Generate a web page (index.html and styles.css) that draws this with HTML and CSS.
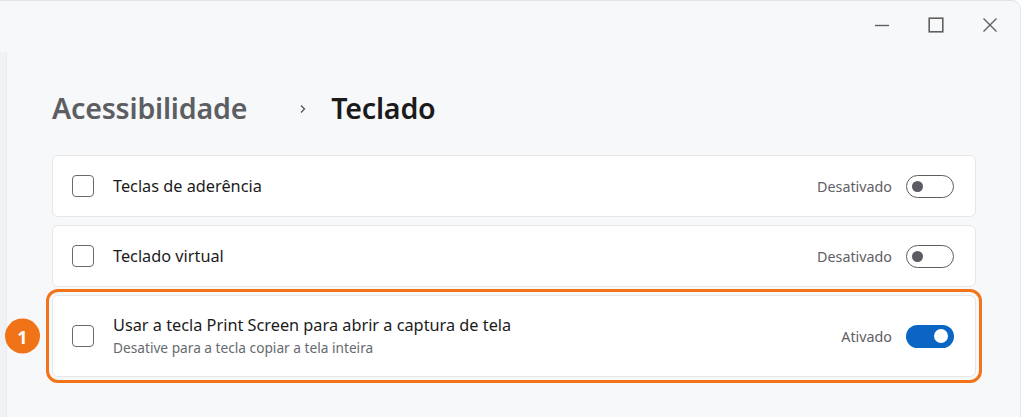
FILE: index.html
```html
<!DOCTYPE html>
<html lang="pt-BR">
<head>
<meta charset="utf-8">
<title>Teclado</title>
<link rel="stylesheet" href="styles.css">
</head>
<body>
<div class="window">
  <div class="titlebar">
    <button class="ctrl" aria-label="Minimizar">
      <svg width="16" height="16" viewBox="0 0 16 16"><path d="M1 8.5h14" stroke="#5f5f5f" stroke-width="1.4" fill="none"/></svg>
    </button>
    <button class="ctrl" aria-label="Maximizar">
      <svg width="16" height="16" viewBox="0 0 16 16"><rect x="1.2" y="1.2" width="13.6" height="13.6" stroke="#5f5f5f" stroke-width="1.6" fill="none"/></svg>
    </button>
    <button class="ctrl" aria-label="Fechar">
      <svg width="16" height="16" viewBox="0 0 16 16"><path d="M1.5 1.5l13 13M14.5 1.5l-13 13" stroke="#5f5f5f" stroke-width="1.4" fill="none"/></svg>
    </button>
  </div>
  <div class="main">
    <div class="nav-edge"></div>
    <div class="content">
      <h1 class="breadcrumb">
        <span class="crumb-parent">Acessibilidade</span>
        <span class="crumb-sep">
          <svg width="8" height="10" viewBox="0 0 8 10"><path d="M2 1.5l3.5 3.5L2 8.5" stroke="#555" stroke-width="1.3" fill="none"/></svg>
        </span>
        <span class="crumb-current">Teclado</span>
      </h1>
      <div class="list">
        <div class="card">
          <span class="checkbox"></span>
          <div class="label"><div class="title">Teclas de aderência</div></div>
          <span class="state">Desativado</span>
          <span class="toggle off"><span class="knob"></span></span>
        </div>
        <div class="card">
          <span class="checkbox"></span>
          <div class="label"><div class="title">Teclado virtual</div></div>
          <span class="state">Desativado</span>
          <span class="toggle off"><span class="knob"></span></span>
        </div>
        <div class="card tall highlight">
          <span class="badge">1</span>
          <span class="checkbox"></span>
          <div class="label">
            <div class="title">Usar a tecla Print Screen para abrir a captura de tela</div>
            <div class="subtitle">Desative para a tecla copiar a tela inteira</div>
          </div>
          <span class="state">Ativado</span>
          <span class="toggle on"><span class="knob"></span></span>
        </div>
      </div>
    </div>
  </div>
</div>
</body>
</html>
```

FILE: styles.css
```css
html, body {
  margin: 0;
  padding: 0;
  background: #ffffff;
  height: 100%;
}
body {
  font-family: "Noto Sans", "Open Sans", sans-serif;
  color: #1b1b1b;
  overflow: hidden;
}
.window {
  width: 1021px;
  height: 430px;
  background: #f7f8fa;
  border-top: 1px solid #e2e3e5;
  border-right: 1px solid #e6e7e9;
  border-top-right-radius: 9px;
  display: flex;
  flex-direction: column;
  box-sizing: border-box;
}
.titlebar {
  height: 51px;
  display: flex;
  justify-content: flex-end;
  align-items: flex-start;
  padding-right: 18px;
  gap: 30px;
}
.ctrl {
  border: 0;
  background: transparent;
  padding: 0;
  margin-top: 16px;
  width: 24px;
  height: 16px;
  display: flex;
  align-items: center;
  justify-content: center;
}
.ctrl svg { display: block; }
.main {
  flex: 1;
  display: flex;
}
.nav-edge {
  width: 6px;
  background: #f1f2f4;
  border-right: 1px solid #eaebed;
}
.content {
  flex: 1;
  padding: 0 44px 0 45px;
}
.breadcrumb {
  margin: 0;
  padding-top: 36px;
  height: 40px;
  display: flex;
  align-items: center;
  font-size: 28.6px;
  font-weight: 600;
  line-height: 40px;
  letter-spacing: -0.2px;
}
.crumb-parent { color: #5c5e62; }
.crumb-sep {
  display: flex;
  align-items: center;
  margin: 0 24px 0 52px;
  padding-top: 2px;
}
.crumb-current { color: #1b1b1b; }
.list {
  margin-top: 27px;
  display: flex;
  flex-direction: column;
  gap: 8px;
}
.card {
  position: relative;
  height: 62px;
  box-sizing: border-box;
  background: #ffffff;
  border: 1px solid #e6e7e9;
  border-radius: 6px;
  display: flex;
  align-items: center;
  padding: 0 21px 0 19px;
}
.card.tall { height: 82px; }
.card.highlight {
  outline: 3px solid #f27318;
  outline-offset: 3px;
  border-radius: 6px;
}
.checkbox {
  width: 22px;
  height: 22px;
  box-sizing: border-box;
  border: 1.5px solid #6a6a6a;
  border-radius: 4px;
  flex: none;
  margin-right: 19px;
}
.label {
  flex: 1;
  display: flex;
  flex-direction: column;
}
.title {
  font-size: 16.3px;
  line-height: 21px;
  color: #1b1b1b;
}
.subtitle {
  font-size: 13.7px;
  line-height: 18px;
  color: #666a6f;
  margin-top: 3px;
}
.state {
  font-size: 14.3px;
  color: #5f6063;
  margin-right: 14px;
}
.toggle {
  width: 48px;
  height: 23px;
  box-sizing: border-box;
  border-radius: 12px;
  display: flex;
  align-items: center;
  flex: none;
}
.toggle.off {
  border: 1.5px solid #5d5d5d;
  padding-left: 5px;
}
.toggle.off .knob {
  width: 11px;
  height: 11px;
  border-radius: 50%;
  background: #5a5b63;
}
.toggle.on {
  background: #0a66c2;
  justify-content: flex-end;
  padding-right: 6px;
}
.toggle.on .knob {
  width: 14px;
  height: 14px;
  border-radius: 50%;
  background: #ffffff;
}
.badge {
  position: absolute;
  left: -48px;
  top: 50%;
  transform: translateY(-50%);
  width: 35px;
  height: 35px;
  border-radius: 50%;
  background: #f07318;
  color: #ffffff;
  font-weight: 700;
  font-size: 18px;
  display: flex;
  align-items: center;
  justify-content: center;
}
```
